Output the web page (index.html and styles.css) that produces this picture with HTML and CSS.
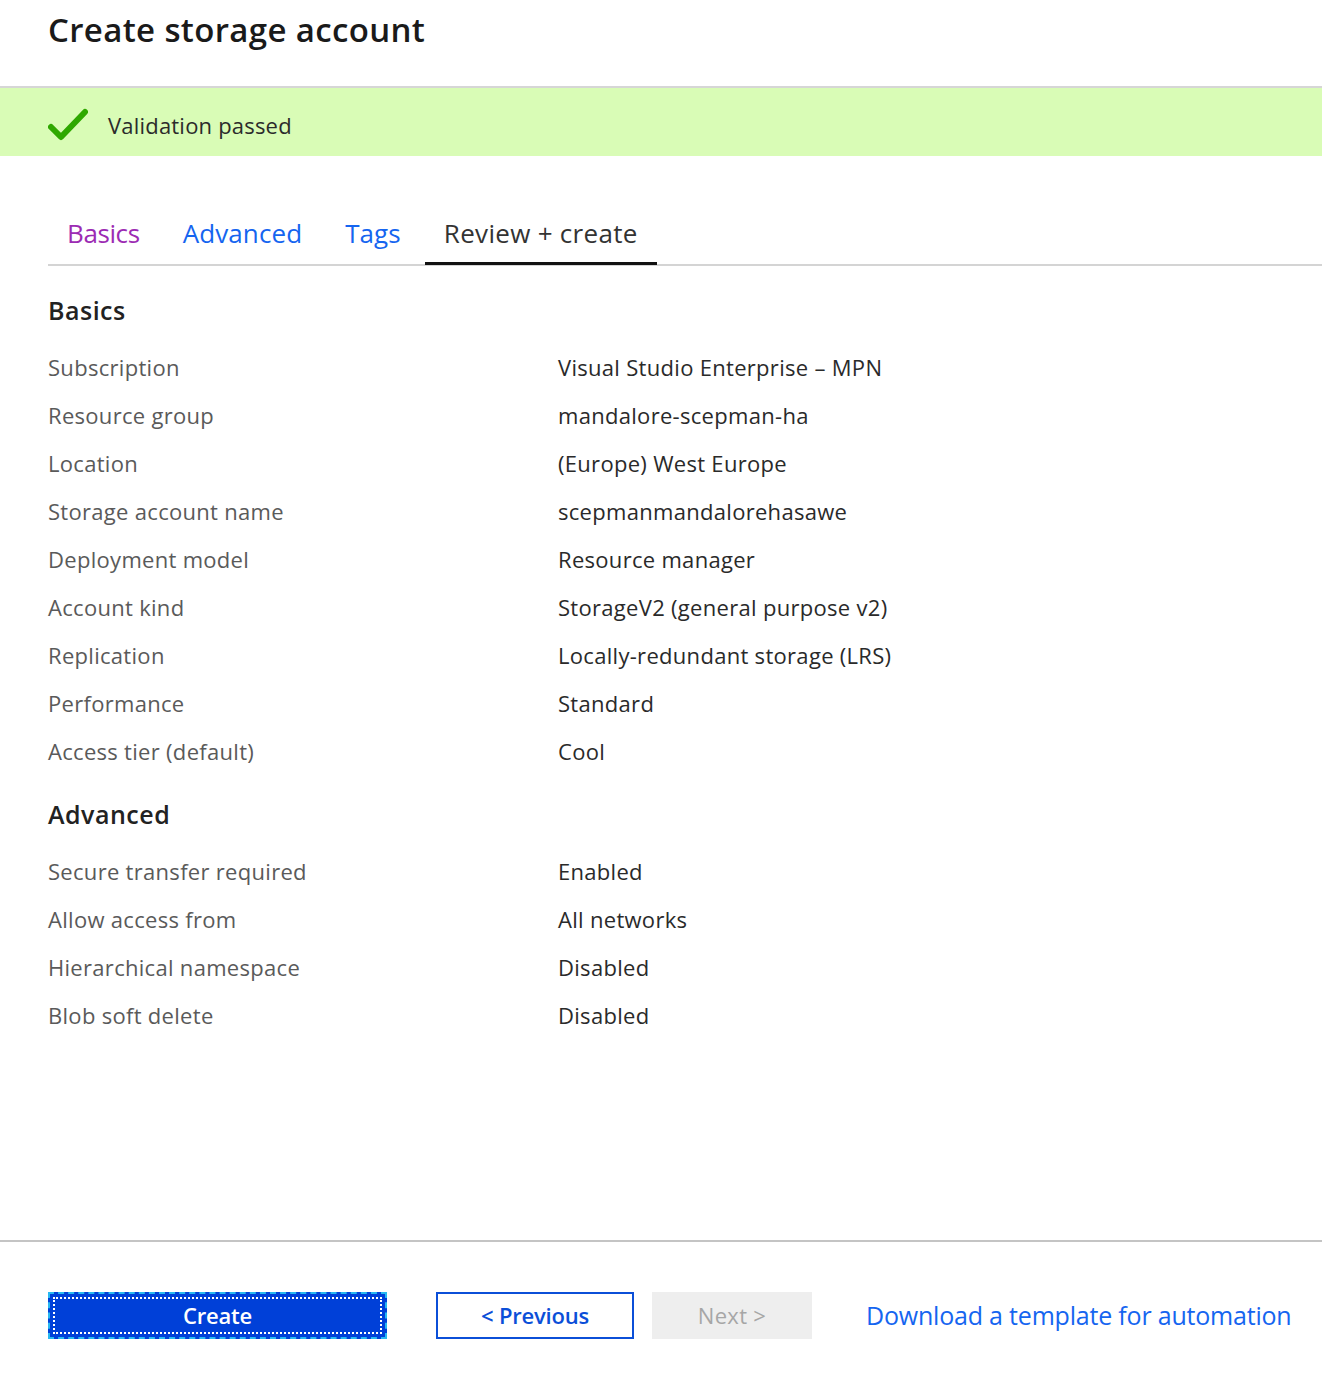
FILE: index.html
```html
<!DOCTYPE html>
<html lang="en">
<head>
<meta charset="utf-8">
<title>Create storage account</title>
<link rel="stylesheet" href="styles.css">
</head>
<body>
<div class="page">
  <header class="title-bar">
    <h1 class="title">Create storage account</h1>
  </header>
  <div class="banner">
    <svg class="check" width="40" height="34" viewBox="0 0 40 34" aria-hidden="true">
      <path d="M3 19 L13 29 L37 4" fill="none" stroke="#2fa800" stroke-width="6" stroke-linecap="round" stroke-linejoin="round"/>
    </svg>
    <span class="banner-text">Validation passed</span>
  </div>

  <main class="content">
    <nav class="tabs">
      <a class="tab tab-visited">Basics</a>
      <a class="tab tab-link">Advanced</a>
      <a class="tab tab-link">Tags</a>
      <a class="tab tab-active">Review + create</a>
    </nav>

    <section class="section">
      <h2 class="section-title">Basics</h2>
      <dl class="rows">
        <div class="row"><dt>Subscription</dt><dd>Visual Studio Enterprise – MPN</dd></div>
        <div class="row"><dt>Resource group</dt><dd>mandalore-scepman-ha</dd></div>
        <div class="row"><dt>Location</dt><dd>(Europe) West Europe</dd></div>
        <div class="row"><dt>Storage account name</dt><dd>scepmanmandalorehasawe</dd></div>
        <div class="row"><dt>Deployment model</dt><dd>Resource manager</dd></div>
        <div class="row"><dt>Account kind</dt><dd>StorageV2 (general purpose v2)</dd></div>
        <div class="row"><dt>Replication</dt><dd>Locally-redundant storage (LRS)</dd></div>
        <div class="row"><dt>Performance</dt><dd>Standard</dd></div>
        <div class="row"><dt>Access tier (default)</dt><dd>Cool</dd></div>
      </dl>
    </section>

    <section class="section">
      <h2 class="section-title">Advanced</h2>
      <dl class="rows">
        <div class="row"><dt>Secure transfer required</dt><dd>Enabled</dd></div>
        <div class="row"><dt>Allow access from</dt><dd>All networks</dd></div>
        <div class="row"><dt>Hierarchical namespace</dt><dd>Disabled</dd></div>
        <div class="row"><dt>Blob soft delete</dt><dd>Disabled</dd></div>
      </dl>
    </section>
  </main>

  <footer class="footer">
    <button class="btn btn-primary"><span class="focus">Create</span></button>
    <button class="btn btn-secondary">&lt; Previous</button>
    <button class="btn btn-disabled">Next &gt;</button>
    <a class="download">Download a template for automation</a>
  </footer>
</div>
</body>
</html>
```

FILE: styles.css
```css
* { box-sizing: border-box; }
html, body {
  margin: 0;
  padding: 0;
  background: #ffffff;
}
body {
  font-family: "Open Sans", "Noto Sans", "Liberation Sans", sans-serif;
  color: #333;
}
.page {
  width: 1322px;
  height: 1388px;
  display: flex;
  flex-direction: column;
  overflow: hidden;
}
.title-bar {
  height: 88px;
  padding: 8px 0 0 48px;
  border-bottom: 2px solid #d6d6d6;
}
.title {
  margin: 0;
  font-size: 33px;
  font-weight: 600;
  color: #1a1a1a;
  line-height: 44px;
  letter-spacing: 0.35px;
}
.banner {
  height: 68px;
  background: #d9fcb6;
  display: flex;
  align-items: center;
  padding-left: 48px;
  padding-top: 6px;
}
.check { margin-right: 20px; margin-top: -1px; }
.banner-text {
  font-size: 22px;
  color: #2b2b2b;
  letter-spacing: 0.2px;
}
.content {
  flex: 1;
  padding: 0 0 0 48px;
}
.tabs {
  margin-top: 57px;
  display: flex;
  border-bottom: 2px solid #d4d4d4;
  height: 53px;
}
.tab {
  font-size: 26px;
  line-height: 40px;
  padding: 0 19px;
  margin-right: 5px;
  letter-spacing: 0.1px;
}
.tab-visited { color: #9c2bb3; letter-spacing: -0.4px; }
.tab-link { color: #1565f0; }
.tab-active {
  color: #333;
  border-bottom: 3px solid #111;
  height: 52px;
  letter-spacing: 0.3px;
}
.section { margin-top: 26px; }
.section + .section { margin-top: 21px; }
.section-title {
  margin: 0 0 15px;
  font-size: 25px;
  font-weight: 600;
  color: #222;
  line-height: 36px;
  letter-spacing: 0.5px;
}
.rows { margin: 0; }
.row {
  display: flex;
  height: 48px;
  align-items: center;
  font-size: 22px;
  letter-spacing: 0.3px;
}
.row dt {
  width: 510px;
  color: #5a5a5a;
}
.row dd {
  margin: 0;
  color: #2a2a2a;
}
.footer {
  height: 148px;
  border-top: 2px solid #c4c4c4;
  display: flex;
  align-items: center;
  padding: 0 0 0 48px;
}
.btn {
  font-family: inherit;
  font-size: 22px;
  height: 47px;
  display: flex;
  align-items: center;
  justify-content: center;
  cursor: pointer;
  letter-spacing: -0.2px;
  font-weight: 600;
}
.btn-primary {
  width: 339px;
  background: #0040d8;
  color: #fff;
  border: 2px dashed #27b8f2;
  padding: 3px;
}
.btn-primary .focus {
  width: 100%;
  height: 100%;
  border: 2px dotted #fff;
  display: flex;
  align-items: center;
  justify-content: center;
}
.btn-secondary {
  margin-left: 49px;
  width: 198px;
  background: #fff;
  color: #0b4fd8;
  border: 2px solid #0b4fd8;
}
.btn-disabled {
  margin-left: 18px;
  width: 160px;
  background: #eeeeee;
  color: #a6a6a6;
  border: none;
  font-weight: 400;
  letter-spacing: 0.3px;
}
.download {
  margin-left: 54px;
  font-size: 25px;
  color: #1565f0;
  letter-spacing: -0.2px;
}
```
